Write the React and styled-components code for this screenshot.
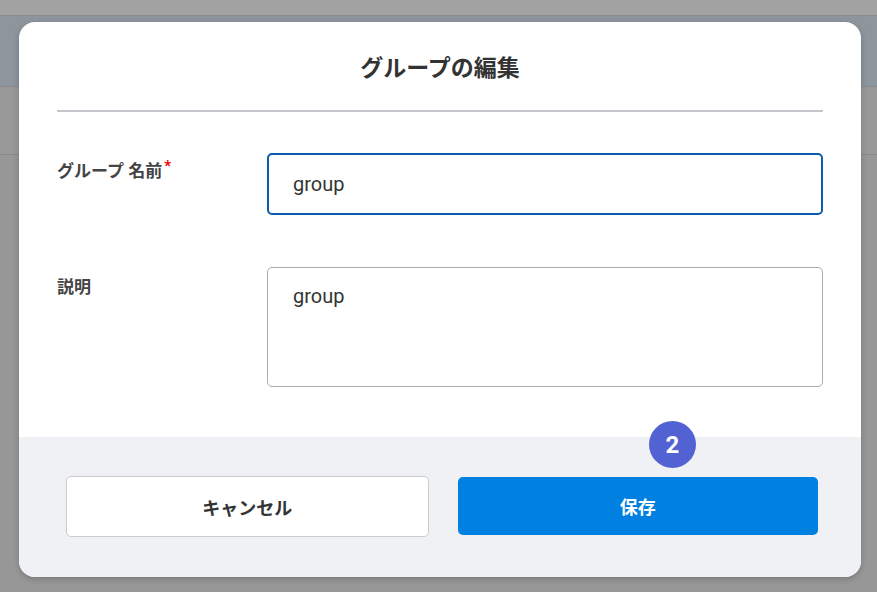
import React from 'react';
import styled, { createGlobalStyle } from 'styled-components';

const Global = createGlobalStyle`
  html, body { margin: 0; padding: 0; }
  body { font-family: Roboto, "Noto Sans CJK JP", sans-serif; }
`;

const Backdrop = styled.div`
  position: relative;
  width: 877px;
  height: 592px;
  overflow: hidden;
  background: #979797;
  display: flex;
  flex-direction: column;
`;

const Band = styled.div`
  height: ${p => p.h}px;
  background: ${p => p.bg};
  border-bottom: 1px solid #8a8a8a;
`;

const Modal = styled.div`
  position: absolute;
  left: 19px;
  top: 22px;
  width: 842px;
  height: 555px;
  background: #fff;
  border-radius: 16px;
  overflow: hidden;
  display: flex;
  flex-direction: column;
  box-shadow: 0 2px 6px rgba(0,0,0,0.2);
`;

const Header = styled.div`
  margin: 0 38px;
  height: 88px;
  border-bottom: 2px solid #c4c6cc;
  display: flex;
  align-items: center;
  justify-content: center;
  font-size: 23px;
  font-weight: 700;
  color: #333;
`;

const Body = styled.div`
  flex: 1;
  padding: 41px 38px 0 38px;
  display: flex;
  flex-direction: column;
  gap: 52px;
`;

const Row = styled.div`
  display: flex;
`;

const Label = styled.div`
  width: 210px;
  padding-top: ${p => p.pt}px;
  font-size: 17px;
  font-weight: 700;
  color: #444;
  span { color: #e00; font-size: 15px; vertical-align: 6px; margin-left: 2px; }
`;

const Input = styled.div`
  flex: 1;
  box-sizing: border-box;
  height: ${p => p.h}px;
  border: ${p => p.focus ? '2px solid #0b5cad' : '1.5px solid #a9abb0'};
  border-radius: 5px;
  padding: ${p => p.focus ? '0 24px' : '16px 25px'};
  display: flex;
  align-items: ${p => p.focus ? 'center' : 'flex-start'};
  font-size: 20px;
  color: #333;
`;

const Footer = styled.div`
  position: relative;
  height: 140px;
  background: #f0f1f5;
  display: flex;
  gap: 29px;
  padding: 39px 43px 0 47px;
  box-sizing: border-box;
`;

const Button = styled.div`
  flex: 1;
  height: ${p => p.primary ? 58 : 61}px;
  margin-top: ${p => p.primary ? 1 : 0}px;
  box-sizing: border-box;
  border-radius: 5px;
  background: ${p => p.primary ? '#0080e0' : '#fff'};
  border: ${p => p.primary ? 'none' : '1.5px solid #c9cbd0'};
  color: ${p => p.primary ? '#fff' : '#333'};
  display: flex;
  align-items: center;
  justify-content: center;
  font-size: 18px;
  font-weight: 700;
`;

const Badge = styled.div`
  position: absolute;
  left: 630px;
  top: -16px;
  width: 47px;
  height: 47px;
  border-radius: 50%;
  background: #5262d2;
  color: #fff;
  font-size: 24px;
  font-weight: 700;
  display: flex;
  align-items: center;
  justify-content: center;
`;

export default function App() {
  return (
    <Backdrop>
      <Global />
      <Band h={15} bg="#a3a3a3" />
      <Band h={70} bg="#8d959d" />
      <Band h={67} bg="#999" />
      <Modal>
        <Header>グループの編集</Header>
        <Body>
          <Row>
            <Label pt={4}>グループ 名前<span>*</span></Label>
            <Input focus h={62}>group</Input>
          </Row>
          <Row>
            <Label pt={6}>説明</Label>
            <Input h={120}>group</Input>
          </Row>
        </Body>
        <Footer>
          <Badge>2</Badge>
          <Button>キャンセル</Button>
          <Button primary>保存</Button>
        </Footer>
      </Modal>
    </Backdrop>
  );
}
